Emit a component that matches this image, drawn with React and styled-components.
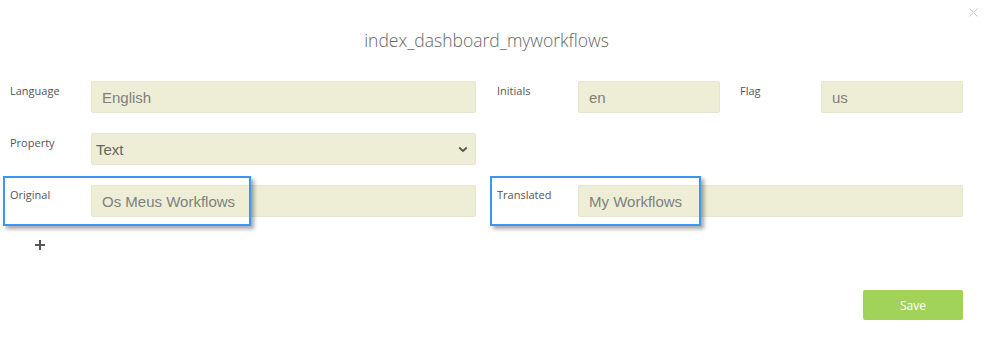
import React from "react";
import styled, { createGlobalStyle } from "styled-components";

const Global = createGlobalStyle`
  html, body { margin: 0; padding: 0; background: #fff; }
  body { font-family: "Open Sans", "Liberation Sans", sans-serif; }
  * { box-sizing: border-box; }
`;

const Modal = styled.div`
  position: relative;
  width: 990px;
  height: 350px;
  padding: 0 27px 0 10px;
  background: #fff;
`;

const Close = styled.button`
  position: absolute;
  top: 6px;
  right: 11px;
  width: 12px;
  height: 12px;
  padding: 0;
  border: 0;
  background: transparent;
  display: flex;
  align-items: center;
  justify-content: center;
`;

const Title = styled.h4`
  margin: 0;
  height: 81px;
  padding-top: 26px;
  text-align: center;
  font-family: "Open Sans", sans-serif;
  font-weight: 300;
  font-size: 17.5px;
  color: #666;
  line-height: 28px;
`;

const Row = styled.div`
  display: grid;
  grid-template-columns: 81px 385px 21px 81px 142px 20px 81px 142px;
  margin-bottom: 20px;
  position: relative;
`;

const Label = styled.label`
  grid-column: ${(p) => p.$col};
  font-family: "Open Sans", sans-serif;
  font-size: 11px;
  color: #555;
  line-height: 15px;
  padding-top: 2px;
`;

const Field = styled.div`
  grid-column: ${(p) => p.$col};
  height: 32px;
  background: #eeeed6;
  border: 1px solid #e6e6cc;
  border-radius: 2px;
  display: flex;
  align-items: center;
  padding-left: ${(p) => (p.$select ? "4px" : "10px")};
  padding-right: 7px;
  font-family: "Liberation Sans", Arial, sans-serif;
  font-size: 15px;
  color: ${(p) => (p.$select ? "#666" : "#808080")};
  justify-content: space-between;
`;

const Highlight = styled.div`
  position: absolute;
  top: -9px;
  left: ${(p) => p.$left}px;
  width: ${(p) => p.$width}px;
  height: 50px;
  border: 2px solid #3d96f4;
  box-shadow: 3px 3px 4px rgba(0, 0, 0, 0.35);
  pointer-events: none;
`;

const Plus = styled.div`
  margin: 23px 0 0 25px;
  width: 10px;
  height: 10px;
  position: relative;
  &::before, &::after {
    content: "";
    position: absolute;
    background: #555;
  }
  &::before { left: 0; top: 4px; width: 10px; height: 2px; }
  &::after { left: 4px; top: 0; width: 2px; height: 10px; }
`;

const Footer = styled.div`
  display: flex;
  justify-content: flex-end;
  margin-top: 40px;
`;

const SaveButton = styled.button`
  width: 100px;
  height: 30px;
  border: 0;
  border-radius: 2px;
  background: #a1d35b;
  color: #fff;
  font-family: "Open Sans", sans-serif;
  font-size: 12px;
`;

const Chevron = () => (
  <svg width="10" height="7" viewBox="0 0 10 7">
    <path d="M1.2 1.5 L5 5 L8.8 1.5" fill="none" stroke="#555" strokeWidth="1.8" />
  </svg>
);

export default function App() {
  return (
    <>
      <Global />
      <Modal>
        <Close aria-label="close">
          <svg width="9" height="9" viewBox="0 0 9 9">
            <path d="M0.5 0.5 L8.5 8.5 M8.5 0.5 L0.5 8.5" stroke="#c8c8c8" strokeWidth="1" />
          </svg>
        </Close>
        <Title>index_dashboard_myworkflows</Title>
        <Row>
          <Label $col="1">Language</Label>
          <Field $col="2">English</Field>
          <Label $col="4">Initials</Label>
          <Field $col="5">en</Field>
          <Label $col="7">Flag</Label>
          <Field $col="8">us</Field>
        </Row>
        <Row>
          <Label $col="1">Property</Label>
          <Field $col="2" $select>
            Text
            <Chevron />
          </Field>
        </Row>
        <Row>
          <Label $col="1">Original</Label>
          <Field $col="2">Os Meus Workflows</Field>
          <Label $col="4">Translated</Label>
          <Field $col="5 / 9">My Workflows</Field>
          <Highlight $left={-7} $width={248} />
          <Highlight $left={480} $width={211} />
        </Row>
        <Plus />
        <Footer>
          <SaveButton>Save</SaveButton>
        </Footer>
      </Modal>
    </>
  );
}
